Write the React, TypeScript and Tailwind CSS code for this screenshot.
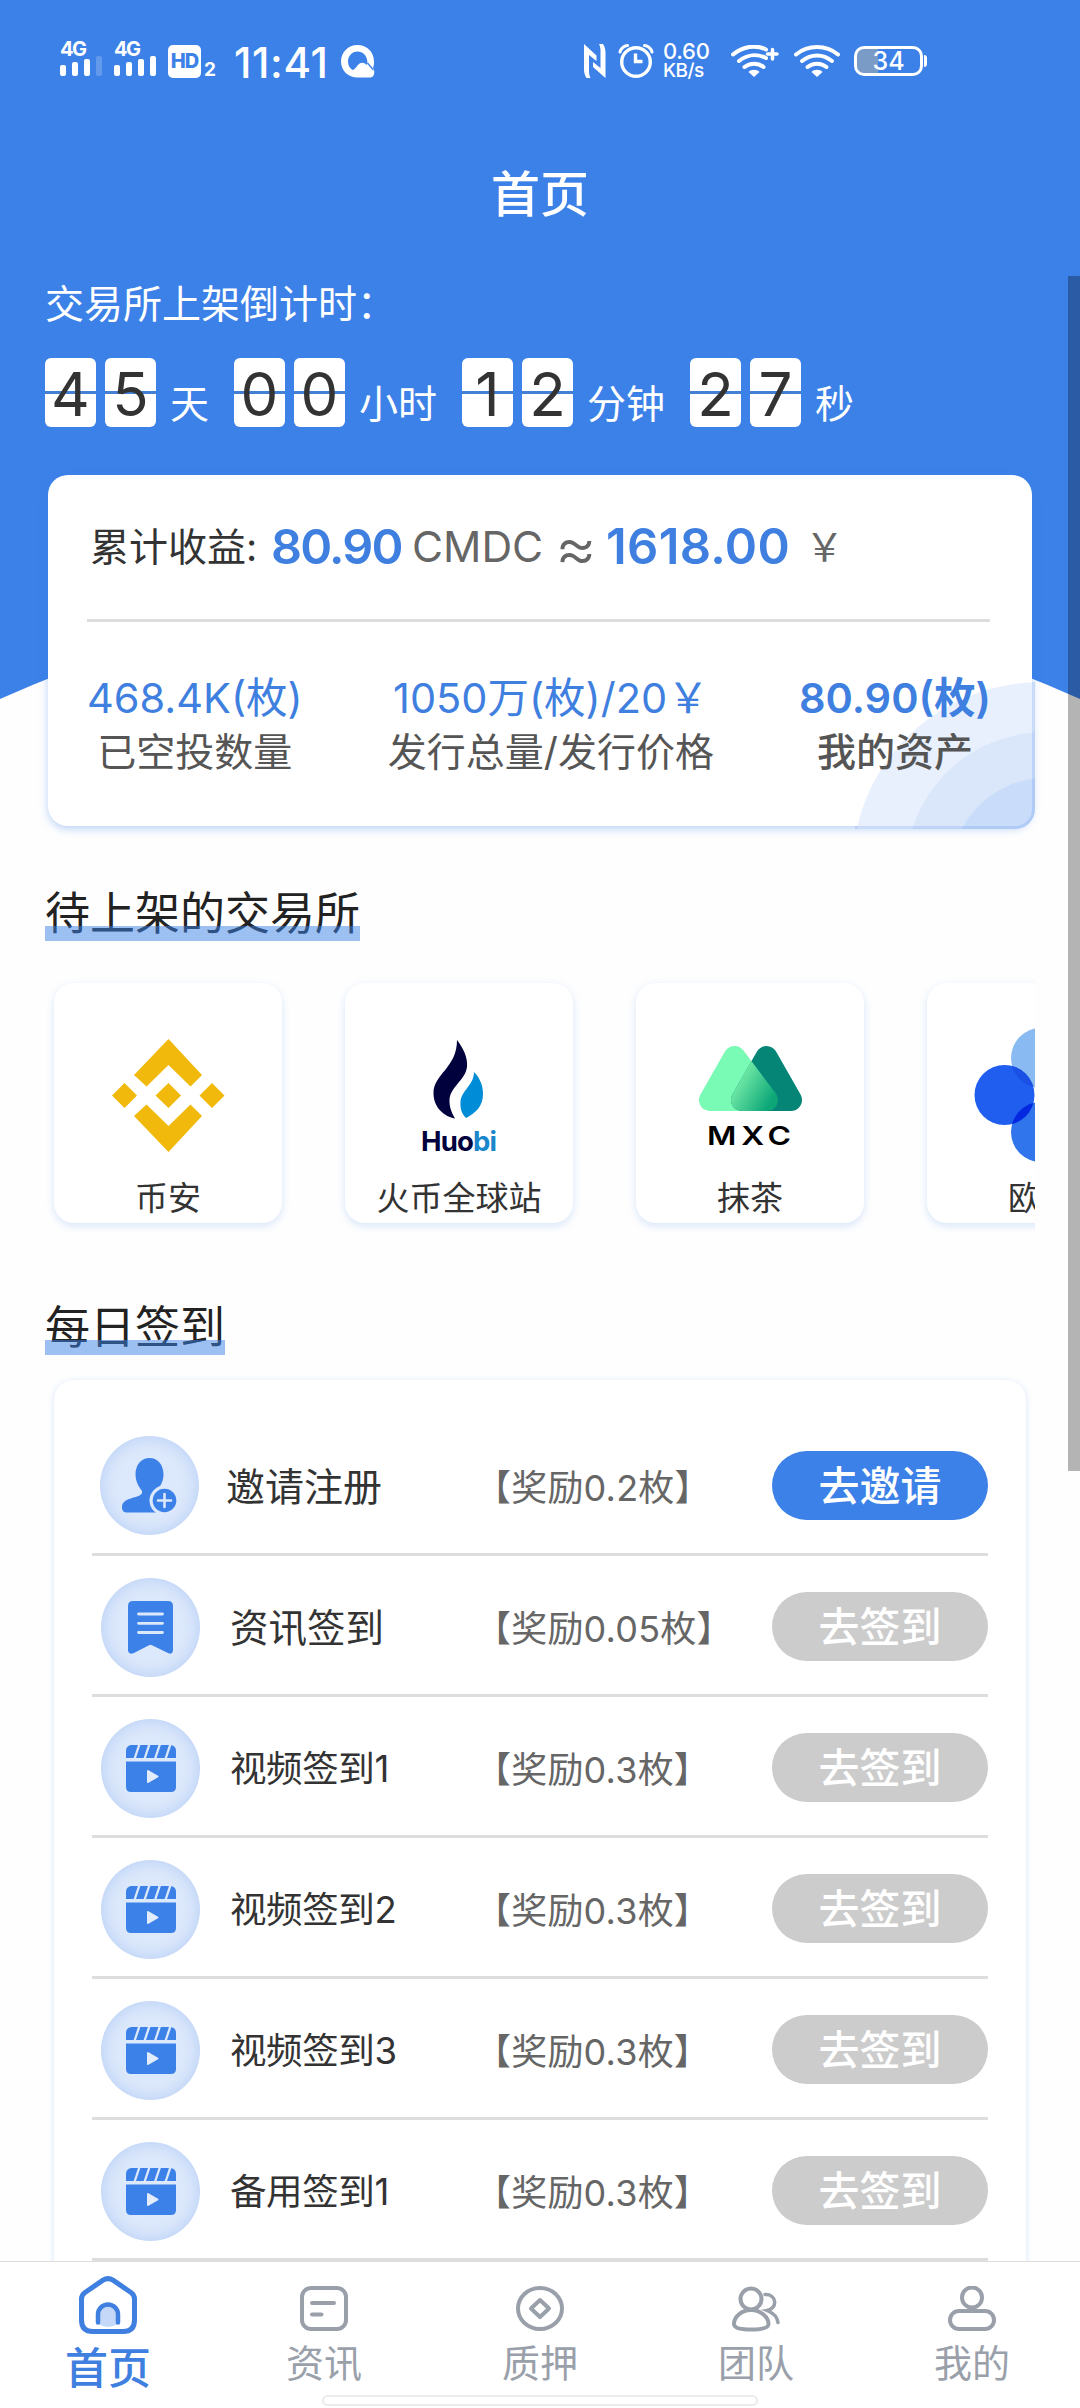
import type { ReactNode } from "react";

type TaskIcon = "invite" | "news" | "video";

interface Task {
  icon: TaskIcon;
  title: string;
  reward: string;
  action: string;
  active?: boolean;
}

const COUNTDOWN = [
  { digits: ["4", "5"], unit: "天" },
  { digits: ["0", "0"], unit: "小时" },
  { digits: ["1", "2"], unit: "分钟" },
  { digits: ["2", "7"], unit: "秒" },
];

const TASKS: Task[] = [
  { icon: "invite", title: "邀请注册", reward: "0.2", action: "去邀请", active: true },
  { icon: "news", title: "资讯签到", reward: "0.05", action: "去签到" },
  { icon: "video", title: "视频签到1", reward: "0.3", action: "去签到" },
  { icon: "video", title: "视频签到2", reward: "0.3", action: "去签到" },
  { icon: "video", title: "视频签到3", reward: "0.3", action: "去签到" },
  { icon: "video", title: "备用签到1", reward: "0.3", action: "去签到" },
];

const CIRCLE_STYLES: Record<TaskIcon, string> = {
  invite: "ml-[8px]",
  news: "mt-[2px] ml-[9px]",
  video: "mt-[2px] ml-[9px]",
};

const TITLE_STYLES: Record<TaskIcon, string> = {
  invite: "ml-[27px] text-[39px]",
  news: "ml-[30px] text-[38.5px]",
  video: "ml-[30px] text-[36.5px] tracking-[-0.4px]",
};

function Signal({ weak }: { weak?: boolean }) {
  return (
    <div className="flex flex-col w-[42px]">
      <span className="h-[15px] text-[20px] leading-[17px] font-bold tracking-[-1.5px]">4G</span>
      <svg width="42" height="20" viewBox="0 0 42 20" fill="#fff">
        <rect x="0" y="9" width="6" height="11" rx="2" />
        <rect x="12" y="6" width="6" height="14" rx="2" />
        <rect x="24" y="3" width="6" height="17" rx="2" />
        <rect x="36" y="0" width="6" height="20" rx="2" opacity={weak ? 0.2 : 1} />
      </svg>
    </div>
  );
}

function Wifi({ plus }: { plus?: boolean }) {
  return (
    <svg width="48" height="33" viewBox="0 0 48 33" fill="none" stroke="#fff" strokeWidth="4" strokeLinecap="round">
      {plus ? <path d="M2 9.5C12 1 25 -.5 35 4.5" /> : <path d="M2 9.5C14 -.5 32 -.5 44 9.5" />}
      {plus ? <path d="M8 16C16 9.500 26 8.500 35 13" /> : <path d="M8 16C17 8.500 29 8.500 38 16" />}
      <path d="M13.500 22C19 17.500 27 17.500 32.500 22" />
      <path d="M17.500 27C20 24 26 24 28.500 27L23 32Z" fill="#fff" stroke="none" />
      {plus && <path d="M36.500 9H46M41.500 4.500V14" strokeWidth="3.500" />}
    </svg>
  );
}

function StatusBar() {
  return (
    <div className="flex h-[122px] items-center pl-[60px] text-white">
      <div className="-mt-[5px] flex items-center">
        <Signal weak />
      </div>
      <div className="-mt-[5px] ml-3">
        <Signal />
      </div>
      <div className="ml-3 flex h-[33px] w-[33px] items-center justify-center rounded-[5px] bg-white text-[20px] leading-none font-extrabold tracking-[-1px] text-[#3c81e8]">
        HD
      </div>
      <span className="mt-[16px] ml-[3px] w-[12px] text-[19px] leading-none font-bold">2</span>
      <span className="mt-[4px] ml-[18px] w-[94px] text-[42px] leading-none font-medium tracking-[0.600px] whitespace-nowrap">
        11:41
      </span>
      <svg className="ml-[13px]" width="34" height="33" viewBox="0 0 34 33" fill="#fff">
        <path
          fillRule="evenodd"
          d="M16.500 0C26 0 33 7 33 16.500c0 2.500 0 4-1 6 2 3 2 9.500-2.500 10H16.500C7 32.500 0 25.500 0 16.500S7 0 16.500 0ZM16.500 6.500C11 6.500 7 11 7 16.500c0 4 2 7 4.500 8.500 2-.5 3-2 5-4.500 2.500-3.500 6.500-3.500 9 -.5 .8-1.200 1-2.500 .8-4C25.800 10.500 22 6.500 16.500 6.500Z"
        />
        <path d="M26.500 18l6 7" stroke="#3c81e8" strokeWidth="1.300" />
      </svg>

      <svg className="ml-[209px]" width="22" height="34" viewBox="0 0 22 34" fill="#fff">
        <path d="M0 0L12.500 11.500V17L5 11V27c0 3 .5 5 1.500 7H2.500C.5 31 0 28 0 25Z" />
        <path d="M21.500 34L9 23V18l7.500 6V7c0-3-.5-5-1.500-7h4c2 3 2.500 6 2.500 9Z" />
      </svg>
      <svg className="ml-[12px]" width="36" height="34" viewBox="0 0 36 34" fill="none" stroke="#fff" strokeLinecap="round">
        <circle cx="18" cy="18" r="14.300" strokeWidth="3.400" />
        <path d="M2 8C3 4.500 6 2 9.500 1.500M34 8C33 4.500 30 2 26.500 1.500" strokeWidth="3" />
        <path d="M17.500 9.500V17.500H24.500" strokeWidth="3.400" strokeLinecap="butt" />
      </svg>
      <div className="ml-[9px] flex w-[46px] flex-col whitespace-nowrap">
        <span className="text-[22px] leading-[19px] font-medium tracking-[-0.300px]">0.60</span>
        <span className="text-[19px] leading-[19px] font-medium tracking-[-0.500px]">KB/s</span>
      </div>
      <div className="ml-[22px]">
        <Wifi plus />
      </div>
      <div className="ml-[15px]">
        <Wifi />
      </div>
      <div className="ml-[12px] flex h-[30px] w-[69px] items-center justify-center rounded-[10px] border-[3px] border-white bg-linear-to-r from-[#7a9bc6] from-34% to-transparent to-34% bg-clip-padding text-[25px] leading-none font-medium">
        34
      </div>
      <div className="ml-px h-[12px] w-[3px] rounded-r-full bg-white" />
    </div>
  );
}

function FlipDigit({ value }: { value: string }) {
  return (
    <div className="relative h-[69px] w-[51px] rounded-[6px] bg-white">
      <div className="absolute top-[33px] h-[3px] w-full bg-[#4380d3]" />
      <div className="relative pt-[4px] text-center text-[60px] leading-[65px] text-[#333]">{value}</div>
    </div>
  );
}

function Countdown() {
  return (
    <div className="mt-[35px] flex h-[69px] pl-[45px]">
      {COUNTDOWN.map((part) => (
        <div key={part.unit} className="mr-[25px] flex">
          <div className="flex gap-[9px]">
            {part.digits.map((digit, i) => (
              <FlipDigit key={i} value={digit} />
            ))}
          </div>
          <span className="mt-[26px] ml-[14px] text-[39px] leading-[39px] text-white">{part.unit}</span>
        </div>
      ))}
    </div>
  );
}

function Stat({ value, label, bold }: { value: ReactNode; label: string; bold?: boolean }) {
  return (
    <div className="flex flex-col items-center whitespace-nowrap">
      <span className={`text-[41.500px] leading-[51px] text-[#3f7fe0] ${bold ? "font-semibold" : ""}`}>{value}</span>
      <span className={`text-[39px] leading-[56px] text-[#555] ${bold ? "font-medium" : ""}`}>{label}</span>
    </div>
  );
}

function EarningsCard() {
  return (
    <div className="relative mt-[48px] ml-[48px] h-[351px] w-[984px] rounded-[20px] bg-white px-[39px] shadow-[0_3px_9px_rgba(60,129,232,0.35)]">
      {/* quarter rings in the corner */}
      <svg className="absolute -right-[3px] -bottom-[3px]" width="180" height="155" viewBox="0 0 180 155">
        <defs>
          <clipPath id="corner">
            <path d="M0 0H180V135A20 20 0 0 1 160 155H0Z" />
          </clipPath>
        </defs>
        <g clipPath="url(#corner)">
          <ellipse cx="187" cy="192" rx="189" ry="184" fill="#e9f0fd" />
          <ellipse cx="190" cy="196" rx="139" ry="138" fill="#dae6fa" />
          <ellipse cx="190" cy="202" rx="95" ry="98" fill="#c9dcf9" />
          <path d="M0 153.500H160A18.500 18.500 0 0 0 178.500 135V8" fill="none" stroke="#3c81e8" strokeOpacity="0.18" strokeWidth="3" />
        </g>
      </svg>
      <div className="relative flex h-[144px] items-center whitespace-nowrap">
        <span className="w-[183px] pl-[3px] text-[39px] text-[#333]">累计收益:</span>
        <span className="ml-px w-[135px] text-[48.500px] font-semibold tracking-[-1.800px] text-[#3f7fe0]">80.90</span>
        <span className="ml-[6px] w-[143px] text-[42.500px] text-[#666]">CMDC</span>
        <span className="w-[51px] text-[64px] leading-[60px] font-light text-[#666]">≈</span>
        <span className="w-[187px] text-[49px] font-semibold tracking-[0.300px] text-[#3f7fe0]">1618.00</span>
        <span className="ml-[12px] text-[39px] text-[#666]">￥</span>
      </div>
      <div className="relative h-[3px] w-[903px] bg-[#ddd]" />
      <div className="relative mt-[51px] flex w-[904px] justify-between">
        <Stat value="468.4K(枚)" label="已空投数量" />
        <Stat value="1050万(枚)/20￥" label="发行总量/发行价格" />
        <Stat value="80.90(枚)" label="我的资产" bold />
      </div>
    </div>
  );
}

function SectionTitle({ children, className }: { children: string; className: string }) {
  return (
    <div className={`relative ml-[45px] h-[51px] w-fit text-[45px] leading-[47px] text-[#222] ${className}`}>
      {children}
      <div className="absolute bottom-0 left-0 h-[15px] w-full bg-[#3c81e8]/50" />
    </div>
  );
}

function BinanceLogo() {
  return (
    <svg width="113" height="113" viewBox="0 0 113 113" fill="#f0b90b">
      <path d="M56.500 0L90 36 78.500 47.500 56.500 26 34.500 47.500 22 36Z" />
      <path d="M56.500 113L90 77 78.500 65.500 56.500 87 34.500 65.500 22 77Z" />
      <path d="M12.500 44L25 56.500 12.500 69 0 56.500ZM56.500 44L69 56.500 56.500 69 43.500 56.500ZM100 44L112.500 56.500 100 69 87.500 56.500Z" />
    </svg>
  );
}

function HuobiLogo() {
  return (
    <svg className="overflow-visible" width="76" height="111" viewBox="0 0 76 111">
      <path d="M36 0C42 8 47 17 46 27C44 41 28.500 47 28.500 61C28.500 68 31 73 34 78.500C22 76 12.500 67 12.500 53C12.500 34 36 28 36 0Z" fill="#01013d" />
      <path d="M53 32C59 38 62 46 62 54C62 66 55 73 45 78C41 74 39 69 39.500 62C40 51 53 45 53 32Z" fill="#008cd6" />
      <text x="0" y="111" fontFamily="Inter, sans-serif" fontSize="27.500" fontWeight="700" textLength="76" fill="#01013d">
        Huo<tspan fill="#1a86cb">bi</tspan>
      </text>
    </svg>
  );
}

function MxcLogo() {
  return (
    <svg className="overflow-visible" width="105" height="98" viewBox="0 0 105 98">
      <defs>
        <linearGradient id="mxcBlend" gradientUnits="userSpaceOnUse" x1="38" y1="38" x2="72" y2="58">
          <stop offset="0" stopColor="#70e9a6" />
          <stop offset="1" stopColor="#0ca677" />
        </linearGradient>
        <mask id="mxcLeft" maskUnits="userSpaceOnUse" x="0" y="0" width="105" height="100">
          <path d="M36.500 11L12 54H69Z" fill="#fff" stroke="#fff" strokeWidth="22" strokeLinejoin="round" />
        </mask>
      </defs>
      <g strokeWidth="22" strokeLinejoin="round">
        <path d="M36.500 11L12 54H69Z" fill="#79fbb5" stroke="#79fbb5" />
        <path d="M68.500 11L44 54H93Z" fill="#048576" stroke="#048576" />
        <g mask="url(#mxcLeft)">
          <path d="M68.500 11L44 54H93Z" fill="url(#mxcBlend)" stroke="url(#mxcBlend)" />
        </g>
      </g>
      <text x="9" y="99" fontFamily="Inter, sans-serif" fontSize="26" fontWeight="600" letterSpacing="4" textLength="89" lengthAdjust="spacingAndGlyphs">
        MXC
      </text>
    </svg>
  );
}

function OkexLogo() {
  return (
    <svg width="134" height="134" viewBox="0 0 134 134">
      <circle cx="67" cy="30" r="30" fill="#8abaf2" />
      <circle cx="67" cy="104" r="30" fill="#3075ec" />
      <circle cx="104" cy="67" r="30" fill="#205eef" />
      <circle cx="30.500" cy="67" r="30" fill="#205eef" />
      <clipPath id="okLeft">
        <circle cx="30.500" cy="67" r="30" />
      </clipPath>
      <g clipPath="url(#okLeft)">
        <circle cx="67" cy="30" r="30" fill="#1a50e4" />
        <circle cx="67" cy="104" r="30" fill="#0428e0" />
      </g>
    </svg>
  );
}

function ExchangeCard({ name, children }: { name: string; children: ReactNode }) {
  return (
    <div className="flex h-[240px] w-[228px] shrink-0 flex-col items-center rounded-[20px] bg-white shadow-[0_3px_8px_rgba(60,129,232,0.2)]">
      <div className="flex h-[199px] items-center justify-center pt-[25px]">{children}</div>
      <span className="text-[33px] leading-[33px] text-[#333]">{name}</span>
    </div>
  );
}

function Exchanges() {
  return (
    <div className="ml-[45px] flex w-[990px] gap-[63px] overflow-hidden pt-[42px] pb-[40px] pl-[9px]">
      <ExchangeCard name="币安">
        <BinanceLogo />
      </ExchangeCard>
      <ExchangeCard name="火币全球站">
        <HuobiLogo />
      </ExchangeCard>
      <ExchangeCard name="抹茶">
        <MxcLogo />
      </ExchangeCard>
      <ExchangeCard name="欧易">
        <OkexLogo />
      </ExchangeCard>
    </div>
  );
}

function InviteIcon() {
  return (
    <svg width="55" height="55" viewBox="0 0 55 55" fill="#3c81e8">
      <path d="M27.500 0C36 0 41.500 7 41.500 16.500C41.500 23 38.500 28 36 31C34.500 33.500 35 35 37 37V54.500H5C1 54.500 0 52 0 49C0 40 15 40 19 36.500C21 34.500 20 32.500 18.500 31C15.500 27 13.500 22 13.500 16.500C13.500 7 19 0 27.500 0Z" />
      <circle cx="42.500" cy="42.500" r="15" fill="#dce8fb" />
      <circle cx="42.500" cy="42.500" r="11.800" />
      <path d="M42.500 36V49M36 42.500H49" stroke="#dce8fb" strokeWidth="2.600" strokeLinecap="round" />
    </svg>
  );
}

function NewsIcon() {
  return (
    <svg width="45" height="53" viewBox="0 0 45 53">
      <path d="M5 0H40Q45 0 45 5V50Q44 54 40 52L24 44.300Q22.500 43 21 44.300L6 52Q1 54 0 50V5Q0 0 5 0Z" fill="#3c81e8" />
      <path d="M10.500 13H34.500M10.500 22.300H34.500M10.500 31.500H34.500" stroke="#dce8fb" strokeWidth="2.800" strokeLinecap="round" />
    </svg>
  );
}

function VideoIcon() {
  return (
    <svg width="50" height="47" viewBox="0 0 50 47">
      <path d="M5 0H45Q50 1 50 6V13H0V6Q0 1 5 0Z" fill="#3c81e8" />
      <path d="M0 16.500H50V42Q50 47 45 47H5Q0 47 0 42Z" fill="#3c81e8" />
      <path d="M8.500 14L13.500 -1M18.500 14L23.500 -1M29 14L34 -1M39.500 14L44.500 -1" stroke="#dce8fb" strokeWidth="2.300" />
      <path d="M22 26L31.500 31.500L22 37Z" fill="#e3ecfb" stroke="#e3ecfb" strokeWidth="2" strokeLinejoin="round" />
    </svg>
  );
}

const TASK_ICONS: Record<TaskIcon, ReactNode> = {
  invite: <InviteIcon />,
  news: <NewsIcon />,
  video: <VideoIcon />,
};

function TaskRow({ task }: { task: Task }) {
  return (
    <div className="flex h-[141px] items-center border-b-[3px] border-[#ddd] pt-[3px] whitespace-nowrap">
      <div
        className={`flex h-[99px] w-[99px] items-center justify-center rounded-full bg-[#dce8fb] shadow-[inset_0_0_16px_rgba(60,129,232,0.25)] ${CIRCLE_STYLES[task.icon]}`}
      >
        {TASK_ICONS[task.icon]}
      </div>
      <span className={`mt-[4px] flex-1 text-[#333] ${TITLE_STYLES[task.icon]}`}>{task.title}</span>
      <span className="mt-[4px] w-[297px] text-[36px] tracking-[0.200px] text-[#666]">【奖励{task.reward}枚】</span>
      <button
        className={`h-[69px] w-[216px] rounded-[36px] pt-[2px] text-[41px] leading-[67px] font-medium text-white ${
          task.active ? "bg-[#3c81e8]" : "bg-[#ccc]"
        }`}
      >
        {task.action}
      </button>
    </div>
  );
}

const NAV_ITEMS: { label: string; icon: ReactNode }[] = [
  {
    label: "资讯",
    icon: (
      <>
        <rect x="2" y="2" width="44" height="41" rx="9" />
        <path d="M12 17H34M12 28.500H21.500" />
      </>
    ),
  },
  {
    label: "质押",
    icon: (
      <>
        <ellipse cx="24" cy="22.500" rx="22" ry="20.500" />
        <path d="M24 14L33 22.500L24 31L15 22.500Z" strokeLinejoin="round" />
      </>
    ),
  },
  {
    label: "团队",
    icon: (
      <>
        <circle cx="19" cy="13" r="10.500" />
        <path d="M19 24C9 24 2 31.500 2 38C2 42 9 43.500 19 43.500S36.500 42 36.500 38C36.500 31.500 29 24 19 24Z" />
        <path d="M33 8.500C45 8 46 22.500 35 24.500C41 27 45.500 31 46 36.500" strokeWidth="3.500" />
      </>
    ),
  },
  {
    label: "我的",
    icon: (
      <>
        <circle cx="24" cy="11.500" r="10" />
        <rect x="2" y="25" width="44" height="18" rx="9" />
      </>
    ),
  },
];

function BottomNav() {
  return (
    <nav className="relative grid h-[147px] shrink-0 grid-cols-5 border-t border-[#ddd] bg-white">
      <div className="flex flex-col items-center pt-[14px] text-[#3f7fe0]">
        <svg width="58" height="58" viewBox="0 0 58 58" fill="none" stroke="currentColor" strokeWidth="5" strokeLinecap="round">
          <path d="M24 4.200Q29 1 34 4.200L52 16.500Q55.500 19 55.500 23V44Q55.500 55.500 44 55.500H14Q2.500 55.500 2.500 44V23Q2.500 19 6 16.500Z" />
          <path d="M19 48V38a10 10 0 0 1 20 0V48Q29 54 19 48Z" fill="#c5d8f8" stroke="none" />
          <path d="M19 46.500V38.500a10 10 0 0 1 20 0V46.500" strokeWidth="4.500" />
        </svg>
        <span className="mt-[13px] text-[43px] leading-[43px] font-medium">首页</span>
      </div>
      {NAV_ITEMS.map((item) => (
        <div key={item.label} className="flex flex-col items-center pt-[24px] text-[#9aa0aa]">
          <svg width="48" height="46" viewBox="0 0 48 46" fill="none" stroke="currentColor" strokeWidth="4" strokeLinecap="round">
            {item.icon}
          </svg>
          <span className="mt-[12px] text-[38px] leading-[39px]">{item.label}</span>
        </div>
      ))}
      <div className="absolute bottom-[2px] left-[322px] h-[11px] w-[436px] rounded-full border-2 border-[#ebebeb] bg-white" />
    </nav>
  );
}

export default function App() {
  return (
    <div className="relative flex h-[2408px] w-[1080px] flex-col overflow-hidden bg-[#fefefe] font-['Inter','Noto_Sans_CJK_SC',sans-serif]">
      <svg className="absolute top-0 left-0" width="1080" height="700" viewBox="0 0 1080 700">
        <path d="M0 0H1080V699Q540 460 0 699Z" fill="#3c81e8" />
      </svg>

      <main className="relative min-h-0 flex-1 overflow-hidden">
        <StatusBar />
        <h1 className="h-[144px] text-center text-[49px] leading-[146px] font-medium text-white">首页</h1>
        <p className="mt-[18px] ml-[45px] text-[39px] leading-[39px] text-white">交易所上架倒计时：</p>
        <Countdown />
        <EarningsCard />
        <SectionTitle className="mt-[64px]">待上架的交易所</SectionTitle>
        <Exchanges />
        <SectionTitle className="mt-[41px]">每日签到</SectionTitle>
        <div className="mt-[25px] ml-[54px] h-[1100px] w-[972px] rounded-[20px] bg-white pt-[35px] pr-[38px] pl-[38px] shadow-[0_1px_6px_rgba(60,129,232,0.2)]">
          {TASKS.map((task) => (
            <TaskRow key={task.title} task={task} />
          ))}
        </div>
      </main>

      <BottomNav />
      <div className="absolute top-[276px] right-0 h-[1195px] w-[12px] bg-black/29" />
    </div>
  );
}
